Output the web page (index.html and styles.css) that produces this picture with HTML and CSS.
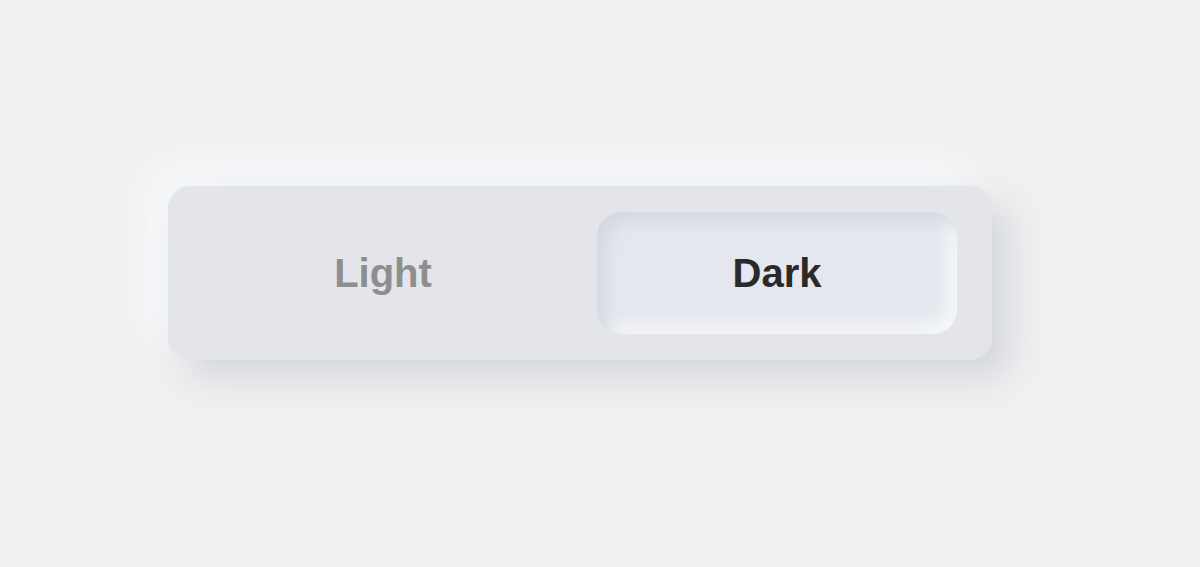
FILE: index.html
```html
<!DOCTYPE html>
<html>
<head>
<meta charset="utf-8">
<link rel="stylesheet" href="styles.css">
</head>
<body>
<div class="page">
  <div class="toggle">
    <button class="opt">Light</button>
    <button class="opt active">Dark</button>
  </div>
</div>
</body>
</html>
```
FILE: styles.css
```css
html, body {
  margin: 0;
  padding: 0;
  background: #f0f0f0;
  height: 100%;
}
.page {
  padding: 186px 0 0 168px;
}
.toggle {
  display: flex;
  gap: 34px;
  width: 824px;
  height: 174px;
  box-sizing: border-box;
  padding: 26px 35px;
  background: #e3e5ea;
  border-radius: 22px;
  box-shadow: 18px 18px 36px #d3d6de, -20px -20px 40px #f6f9fc;
}
.opt {
  flex: 1;
  border: none;
  background: transparent;
  border-radius: 24px;
  font-family: "Liberation Sans", Arial, sans-serif;
  font-weight: bold;
  font-size: 40px;
  color: #8e8e8e;
  padding: 0;
  cursor: pointer;
}
.opt.active {
  color: #2a2a2a;
  background: #e4e7ed;
  box-shadow: inset 9px 9px 16px #d4d7df, inset -9px -9px 16px #f6f8fd;
}
```
